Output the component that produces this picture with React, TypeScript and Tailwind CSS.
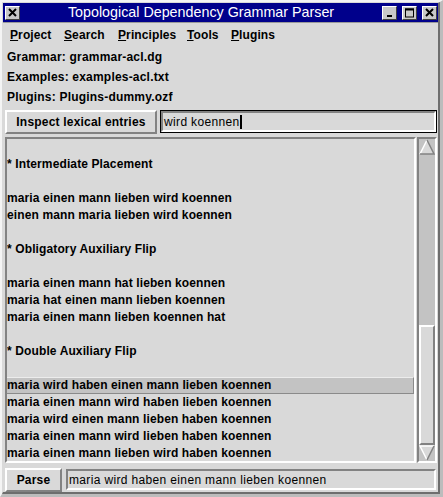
import React from "react";

const raised =
  "border-2 border-t-[#ffffff] border-l-[#ffffff] border-b-[#828282] border-r-[#828282]";
const sunken =
  "border-2 border-t-[#828282] border-l-[#828282] border-b-[#ffffff] border-r-[#ffffff]";

function TitleBtn({ kind }: { kind: "x" | "min" | "max" }) {
  return (
    <div className="w-[15px] h-[14px] bg-[#c8c8c8] border border-t-[#ffffff] border-l-[#ffffff] border-b-[#404040] border-r-[#404040] flex items-center justify-center">
      <svg width="11" height="10" viewBox="0 0 11 10">
        {kind === "x" && (
          <path d="M2 1 L9 8 M9 1 L2 8" stroke="#000" strokeWidth="2" />
        )}
        {kind === "min" && <rect x="3" y="7" width="5" height="2" fill="#000" />}
        {kind === "max" && (
          <rect x="1.5" y="1" width="8" height="8" fill="none" stroke="#000" strokeWidth="1" />
        )}
        {kind === "max" && <rect x="1" y="0.5" width="9" height="2" fill="#000" />}
      </svg>
    </div>
  );
}

const lines: { t: string; sel?: boolean }[] = [
  { t: "" },
  { t: "* Intermediate Placement" },
  { t: "" },
  { t: "maria einen mann lieben wird koennen" },
  { t: "einen mann maria lieben wird koennen" },
  { t: "" },
  { t: "* Obligatory Auxiliary Flip" },
  { t: "" },
  { t: "maria einen mann hat lieben koennen" },
  { t: "maria hat einen mann lieben koennen" },
  { t: "maria einen mann lieben koennen hat" },
  { t: "" },
  { t: "* Double Auxiliary Flip" },
  { t: "" },
  { t: "maria wird haben einen mann lieben koennen", sel: true },
  { t: "maria einen mann wird haben lieben koennen" },
  { t: "maria wird einen mann lieben haben koennen" },
  { t: "maria einen mann wird lieben haben koennen" },
  { t: "maria einen mann lieben wird haben koennen" },
];

export default function App() {
  return (
    <div className="w-[443px] h-[497px] bg-[#d9d9d9] overflow-hidden font-['Liberation_Sans',Arial,sans-serif] text-black border-t-2 border-l-2 border-t-[#f4f4f4] border-l-[#f4f4f4] border-r-[3px] border-b-[3px] border-r-[#bcbcbc] border-b-[#bcbcbc]">
      <div className="w-full h-full flex flex-col border-t border-l border-r-2 border-b-2 border-t-[#d9d9d9] border-l-[#d9d9d9] border-r-[#6e6e6e] border-b-[#6e6e6e]">
        {/* title bar */}
        <div className="h-[19px] bg-[#00008b] flex items-center pl-[2px] pr-[1px] shrink-0">
          <TitleBtn kind="x" />
          <div className="flex-1 text-center text-white text-[14.3px] leading-[19px]">
            Topological Dependency Grammar Parser
          </div>
          <div className="flex gap-[5px]">
            <TitleBtn kind="min" />
            <TitleBtn kind="max" />
            <TitleBtn kind="x" />
          </div>
        </div>

        <div className="flex-1 flex flex-col pl-[2px] pr-[1px] border-t border-t-[#9a9a9a]">
          {/* menu bar */}
          <div className="h-[24px] flex items-center pl-[5px] text-[12px] font-bold tracking-[0.1px] shrink-0">
            <span className="w-[54px]"><span className="underline">P</span>roject</span>
            <span className="w-[54px]"><span className="underline">S</span>earch</span>
            <span className="w-[69px]"><span className="underline">P</span>rinciples</span>
            <span className="w-[44px]"><span className="underline">T</span>ools</span>
            <span><span className="underline">P</span>lugins</span>
          </div>

          {/* info */}
          <div className="flex flex-col text-[12px] font-bold pl-[2px] tracking-[0.2px] shrink-0">
            <div className="h-[20px] leading-[20px]">Grammar: grammar-acl.dg</div>
            <div className="h-[20px] leading-[20px]">Examples: examples-acl.txt</div>
            <div className="h-[20px] leading-[20px]">Plugins: Plugins-dummy.ozf</div>
          </div>

          {/* inspect row */}
          <div className="mt-[3px] h-[24px] flex gap-[3px] shrink-0">
            <div className={`w-[152px] h-[24px] ${raised} flex items-center justify-center text-[12px] font-bold tracking-[0.2px]`}>
              Inspect lexical entries
            </div>
            <div className="flex-1 h-[23px] border border-[#000] ">
              <div className={`w-full h-full ${sunken} flex items-center pl-[1px] text-[12px] tracking-[0.35px]`}>
                <span>wird koennen</span>
                <span className="inline-block w-[2px] h-[14px] bg-black"></span>
              </div>
            </div>
          </div>

          {/* list + scrollbar */}
          <div className="mt-[3px] h-[326px] flex shrink-0">
            <div className={`flex-1 ${sunken} overflow-hidden`}>
              {lines.map((l, i) => (
                <div
                  key={i}
                  className={`h-[17px] leading-[15px] text-[12px] font-bold tracking-[0.12px] whitespace-nowrap ${
                    l.sel
                      ? "bg-[#c3c3c3] border-y border-r border-t-[#ececec] border-b-[#8a8a8a] border-r-[#8a8a8a]"
                      : "border-y border-transparent"
                  }`}
                >
                  {l.t}
                </div>
              ))}
            </div>
            <div className={`w-[20px] ml-[1px] bg-[#c3c3c3] ${sunken} flex flex-col`}>
              <svg width="16" height="16" viewBox="0 0 16 16" className="shrink-0">
                <polygon points="8,1 15,15 1,15" fill="#d9d9d9" />
                <path d="M1 15 L8 1" stroke="#ffffff" strokeWidth="1.5" />
                <path d="M8 1 L15 15 L1 15" stroke="#828282" strokeWidth="1.5" fill="none" />
              </svg>
              <div className="flex-1 flex flex-col justify-end">
                <div className={`h-[120px] bg-[#d9d9d9] ${raised}`}></div>
              </div>
              <svg width="16" height="16" viewBox="0 0 16 16" className="shrink-0">
                <polygon points="1,1 15,1 8,15" fill="#d9d9d9" />
                <path d="M8 15 L1 1 L15 1" stroke="#ffffff" strokeWidth="1.5" fill="none" />
                <path d="M15 1 L8 15" stroke="#828282" strokeWidth="1.5" />
              </svg>
            </div>
          </div>

          {/* parse row */}
          <div className="mt-[5px] h-[24px] flex gap-[3px] shrink-0">
            <div className={`w-[57px] h-[24px] ${raised} flex items-center justify-center text-[12px] font-bold tracking-[0.2px]`}>
              Parse
            </div>
            <div className="flex-1 h-[23px] p-px">
              <div className={`w-full h-full ${sunken} flex items-center pl-[1px] text-[12px] tracking-[0.35px]`}>
                maria wird haben einen mann lieben koennen
              </div>
            </div>
          </div>
        </div>
      </div>
    </div>
  );
}
